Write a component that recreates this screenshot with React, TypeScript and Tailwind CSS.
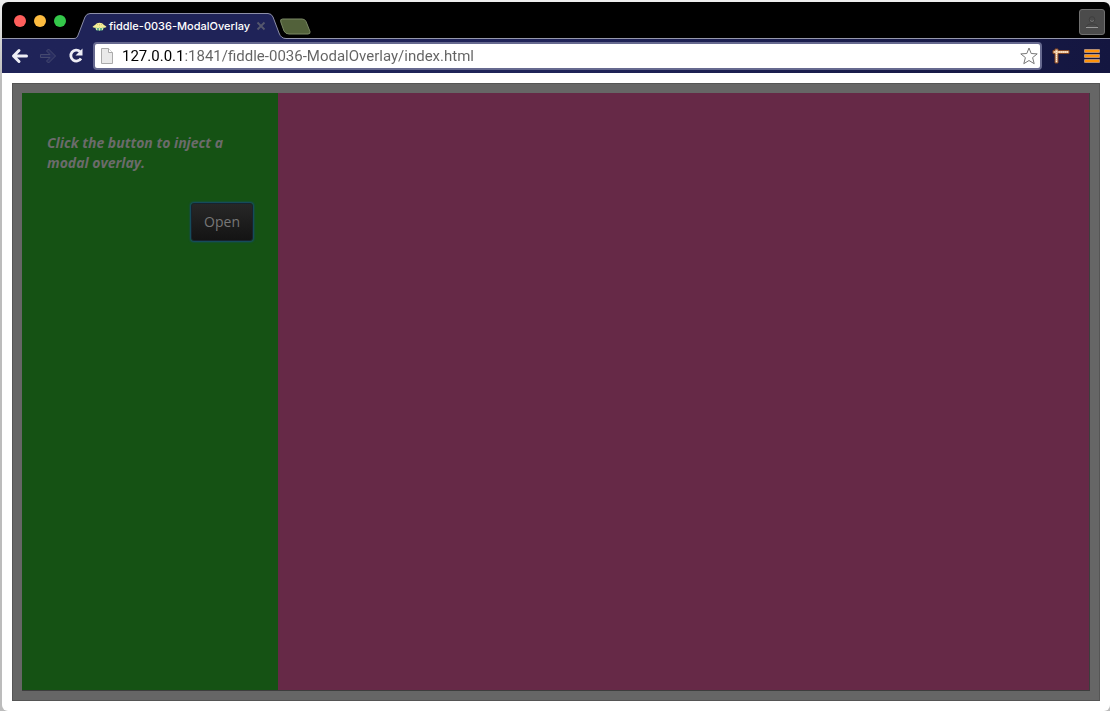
import React from 'react';

function TitleBar() {
  return (
    <header className="flex h-9 items-end bg-black pl-3 pr-[5px]">
      <div className="flex h-full items-center gap-2 pt-0.5">
        <button aria-label="Close window" className="size-3 rounded-full bg-[#ff5f5c]" />
        <button aria-label="Minimise window" className="size-3 rounded-full bg-[#fdbc40]" />
        <button aria-label="Zoom window" className="size-3 rounded-full bg-[#34c84a]" />
      </div>
      <div role="tab" aria-selected="true" className="relative z-10 -mb-px ml-2 flex h-[26px] w-[212px] items-center gap-0.5 pl-[18px]">
        <svg className="absolute inset-0" width="212" height="26" viewBox="0 0 212 26" aria-hidden="true">
          <path d="M0 26V25.5C2.500 25.500 3.500 24 4.500 21L11 4Q12.500 .5 16 .5H194Q197.500 .5 199 4L205 20Q207 25.500 212 25.500V26Z" fill="#1f2358" />
          <path d="M0 25.500C2.500 25.500 3.500 24 4.500 21L11 4Q12.500 .5 16 .5H194Q197.500 .5 199 4L205 20Q207 25.500 212 25.500" fill="none" stroke="#8d8fa8" />
        </svg>
        <PieIcon />
        <span className="relative whitespace-nowrap font-['Inter',sans-serif] text-[11px] font-medium leading-4 text-white">
          fiddle-0036-ModalOverlay
        </span>
        <button aria-label="Close tab" className="relative ml-1">
          <svg width="10" height="10" viewBox="0 0 10 10" aria-hidden="true">
            <path d="M1.500 1.500L8.500 8.500M8.500 1.500L1.500 8.500" stroke="#55576d" strokeWidth="1.800" />
          </svg>
        </button>
      </div>
      <button aria-label="New tab" className="-ml-1.5 mb-[3px]">
        <svg width="32" height="17" viewBox="0 0 32 17" aria-hidden="true">
          <path d="M2.500 1H22Q25 1 26 3.500L30 13.500Q30.500 16 28 16H9Q5.500 16 4 13L.8 4Q-.2 1 2.500 1Z" fill="#52613a" stroke="#7b8965" />
        </svg>
      </button>
      <button aria-label="User profile" className="mb-[3px] ml-auto flex size-[26px] items-center justify-center rounded-[3px] border border-[#707070] bg-[#4b4b4b]">
        <svg width="14" height="14" viewBox="0 0 14 14" fill="none" aria-hidden="true">
          <circle cx="7" cy="4.500" r="2.800" stroke="#3e3e3e" />
          <path d="M5 5.500Q7 7.500 9 5.500" stroke="#777" />
          <path d="M1 12C2 9.500 4 9 7 9S12 9.500 13 12" stroke="#3e3e3e" />
          <path d="M1 12.500H13" stroke="#999" />
        </svg>
      </button>
    </header>
  );
}

function PieIcon() {
  return (
    <svg className="relative" width="15" height="9" viewBox="0 0 15 9" aria-hidden="true">
      <path d="M2.500 5H12.500L10.500 8.500H4.500Z" fill="#69b58c" />
      <path d="M4.500 6V8M7.500 6V8.500M10.500 6V8" stroke="#d8e8ad" />
      <path d="M.5 5Q1 3.800 3 3Q4.500 .8 7.500 .8T12 3Q14 3.800 14.500 5Q13 6 11 5.500Q9 6.500 7.500 5.500Q6 6.500 4 5.500Q2 6 .5 5Z" fill="#f5ee96" />
      <path d="M5 3L6 2M7.500 3.500V2M10 3L9 2" stroke="#c6be65" strokeWidth=".7" />
    </svg>
  );
}

function Toolbar() {
  return (
    <nav aria-label="Browser toolbar" className="flex h-[35px] items-center border-t border-[#9698ac] bg-linear-to-r from-[#1f2358] via-[#1f2358] to-[#141640] px-[9px]">
      <div className="flex items-center gap-2.5">
        <button aria-label="Back">
          <svg width="18" height="18" viewBox="0 0 18 18" fill="none" aria-hidden="true">
            <path d="M15.500 9H3.500M8 3.500L2.500 9L8 14.500" stroke="#eeeef5" strokeWidth="3" strokeLinecap="round" strokeLinejoin="round" />
          </svg>
        </button>
        <button aria-label="Forward" disabled>
          <svg width="18" height="18" viewBox="0 0 18 18" aria-hidden="true">
            <path d="M1.500 7.500H11L7.500 4L9.500 2L16.500 9L9.500 16L7.500 14L11 10.500H1.500Z" fill="#292d61" stroke="#45496f" />
          </svg>
        </button>
        <button aria-label="Reload">
          <svg width="18" height="18" viewBox="0 0 18 18" aria-hidden="true">
            <path d="M13 4.500A5.500 5.500 0 1 0 14 11.500" fill="none" stroke="#eeeef5" strokeWidth="2.800" />
            <path d="M15.500 1.500V8.500H8.500Z" fill="#eeeef5" />
          </svg>
        </button>
      </div>
      <div className="ml-2 flex h-7 min-w-0 flex-1 items-center rounded border-2 border-[#66698f] bg-white pl-1.5 pr-0.5">
        <svg className="shrink-0" width="12" height="16" viewBox="0 0 12 16" aria-hidden="true">
          <path d="M.5 .5H7.500L11.500 4.500V15.500H.5Z" fill="#e9e9e9" stroke="#aaa" />
          <path d="M7.500 .5V4.500H11.500" fill="#fff" stroke="#aaa" />
        </svg>
        <input
          aria-label="Address"
          className="ml-[9px] h-5 min-w-0 flex-1 bg-linear-to-r from-black from-[62px] to-[#626262] to-[62px] bg-clip-text font-['Roboto',sans-serif] text-[15px] leading-5 text-transparent caret-black outline-none"
          defaultValue="127.0.0.1:1841/fiddle-0036-ModalOverlay/index.html"
        />
        <button aria-label="Bookmark this page">
          <svg width="18" height="18" viewBox="0 0 18 18" aria-hidden="true">
            <path d="M9 1L11.200 6.500L17.200 6.900L12.600 10.600L14.200 16.700L9 13.500L3.800 16.700L5.400 10.600L.8 6.900L6.800 6.500Z" fill="#fff" stroke="#777" />
          </svg>
        </button>
      </div>
      <button aria-label="Page ruler" className="ml-2.5">
        <svg width="18" height="18" viewBox="0 0 18 18" aria-hidden="true">
          <path d="M3 2H6V3.500H17V6.500H6V16H3V6.500H1V3.500H3Z" fill="#edc6a0" stroke="#854725" />
          <path d="M7 5H16M4.500 4V15" stroke="#fff1dc" strokeDasharray="1 1" />
        </svg>
      </button>
      <button aria-label="Menu" className="ml-[13px]">
        <svg width="18" height="18" viewBox="0 0 18 18" aria-hidden="true">
          <g fill="#b58e72">
            <rect x="1" y="2" width="16" height="4" rx="1" />
            <rect x="1" y="7" width="16" height="4" rx="1" />
            <rect x="1" y="12" width="16" height="4" rx="1" />
          </g>
          <path d="M2 4H16M2 9H16M2 14H16" stroke="#ff930a" strokeWidth="2" />
        </svg>
      </button>
    </nav>
  );
}

export default function App() {
  return (
    <div className="flex min-h-screen flex-col bg-linear-to-b from-[#eeeeee] to-[#bcbcbc] to-[80px] pl-0.5 pt-0.5">
      <div className="flex flex-1 flex-col overflow-hidden rounded-md bg-white">
        <TitleBar />
        <Toolbar />
        <main className="m-2.5 flex flex-1 border border-[#555] bg-[#666] p-[9px]">
          <div className="flex flex-1 border-b border-r border-[#3d3d3d]">
            <aside className="w-64 bg-[#155214] px-[25px] pt-10 font-['Open_Sans',sans-serif]">
              <p className="text-[14px] font-bold italic leading-5 text-[#6b6b6b]">
                Click the button to inject a modal overlay.
              </p>
              <div className="mt-[30px] flex justify-end">
                <button className="h-[38px] rounded-[3px] border border-[#17232e] bg-linear-to-b from-[#272727] to-[#141414] px-3 text-[14px] leading-5 text-[#777] shadow-[0_0_2px_1px_#174a75]">
                  Open
                </button>
              </div>
            </aside>
            <section aria-label="Content" className="flex-1 bg-[#662947]" />
          </div>
        </main>
      </div>
    </div>
  );
}
